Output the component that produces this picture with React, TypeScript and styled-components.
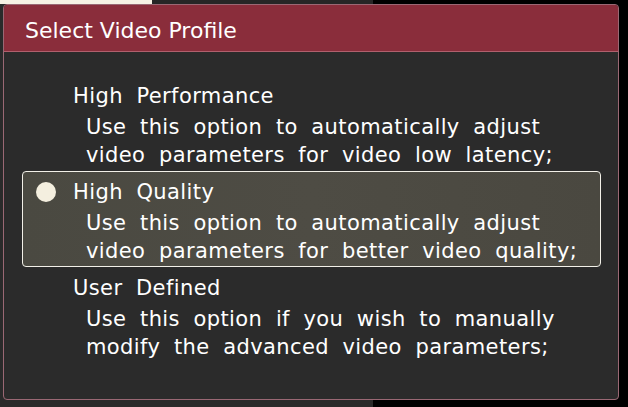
import styled, { createGlobalStyle } from "styled-components";

const GlobalStyle = createGlobalStyle`
  html, body {
    margin: 0;
    padding: 0;
    background: #000;
  }
  body {
    font-family: "DejaVu Sans", "Liberation Sans", sans-serif;
  }
`;

type Profile = {
  title: string;
  lines: string[];
};

const profiles: Profile[] = [
  {
    title: "High Performance",
    lines: [
      "Use this option to automatically adjust",
      "video parameters for video low latency;",
    ],
  },
  {
    title: "High Quality",
    lines: [
      "Use this option to automatically adjust",
      "video parameters for better video quality;",
    ],
  },
  {
    title: "User Defined",
    lines: [
      "Use this option if you wish to manually",
      "modify the advanced video parameters;",
    ],
  },
];

const App: React.FC = () => {
  const selected = 1;

  return (
    <Page>
      <GlobalStyle />
      <TopStrip>
        <Cream />
        <Grey />
      </TopStrip>
      <Dialog>
        <Header>
          <Title>Select Video Profile</Title>
        </Header>
        <Body>
          {profiles.map((p, i) => (
            <Option key={p.title} $active={i === selected}>
              <Radio $active={i === selected} />
              <OptionText>
                <OptionTitle>{p.title}</OptionTitle>
                {p.lines.map((l) => (
                  <Line key={l}>{l}</Line>
                ))}
              </OptionText>
            </Option>
          ))}
        </Body>
      </Dialog>
    </Page>
  );
};

export default App;

const Page = styled.div`
  width: 628px;
  height: 407px;
  overflow: hidden;
  background: linear-gradient(to right, #2a2a2a 0 373px, #000 373px);
`;

const TopStrip = styled.div`
  display: flex;
  height: 4px;
`;

const Cream = styled.div`
  width: 152px;
  background: #f7f1e4;
`;

const Grey = styled.div`
  width: 221px;
  background: #262626;
`;

const Dialog = styled.div`
  margin-left: 3px;
  width: 614px;
  height: 394px;
  border: 1px solid #9a6874;
  border-radius: 4px;
  background: #2b2b2b;
  display: flex;
  flex-direction: column;
  overflow: hidden;
`;

const Header = styled.div`
  height: 47px;
  box-sizing: border-box;
  flex: none;
  background: #8a2d3b;
  border-bottom: 1px solid #b0606d;
  display: flex;
  align-items: center;
  padding: 5px 0 0 21px;
`;

const Title = styled.div`
  color: #fff;
  font-size: 22px;
`;

const Body = styled.div`
  display: flex;
  flex-direction: column;
  padding: 23px 17px 0 18px;
`;

const Option = styled.div<{ $active: boolean }>`
  display: flex;
  align-items: flex-start;
  height: 96px;
  box-sizing: border-box;
  padding: 6px 0 0 13px;
  border-radius: 4px;
  border: 1px solid ${({ $active }) => ($active ? "#f2f0e8" : "transparent")};
  background: ${({ $active }) =>
    $active ? "linear-gradient(to right, #4a4941, #4e4c44 50%, #4a4840)" : "transparent"};
`;

const Radio = styled.div<{ $active: boolean }>`
  width: 20px;
  height: 20px;
  margin-top: 4px;
  margin-right: 17px;
  border-radius: 50%;
  flex: none;
  background: ${({ $active }) => ($active ? "#f4efdf" : "transparent")};
`;

const OptionText = styled.div`
  display: flex;
  flex-direction: column;
  color: #fff;
  font-size: 21px;
  word-spacing: 6.5px;
  letter-spacing: 0.4px;
`;

const OptionTitle = styled.div`
  line-height: 28px;
  margin-bottom: 3px;
`;

const Line = styled.div`
  padding-left: 13px;
  line-height: 28px;
  white-space: nowrap;
`;
